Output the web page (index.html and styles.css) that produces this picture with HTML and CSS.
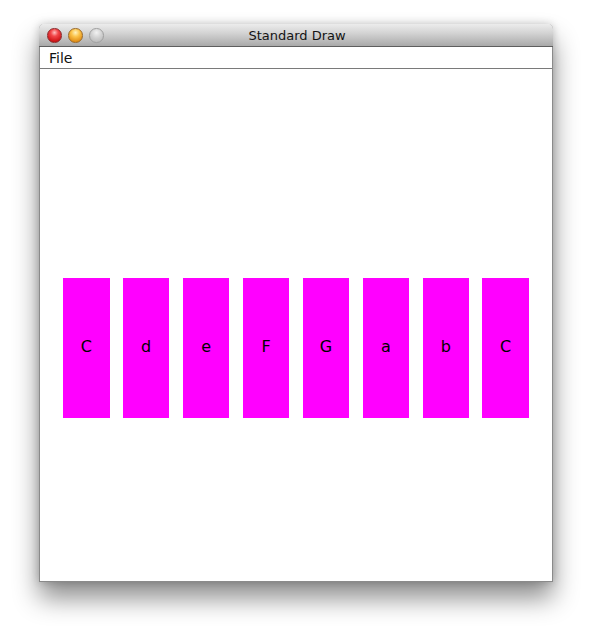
FILE: index.html
```html
<!DOCTYPE html>
<html>
<head>
<meta charset="utf-8">
<link rel="stylesheet" href="styles.css">
</head>
<body>
<div class="stage">
  <div class="window">
    <div class="titlebar">
      <div class="lights">
        <span class="light red"></span>
        <span class="light amber"></span>
        <span class="light grey"></span>
      </div>
      <div class="title">Standard Draw</div>
    </div>
    <div class="menubar"><span class="menu">File</span></div>
    <div class="canvas">
      <div class="bars">
        <div class="bar">C</div>
        <div class="bar">d</div>
        <div class="bar">e</div>
        <div class="bar">F</div>
        <div class="bar">G</div>
        <div class="bar">a</div>
        <div class="bar">b</div>
        <div class="bar">C</div>
      </div>
    </div>
  </div>
</div>
</body>
</html>
```
FILE: styles.css
```css
html, body {
  margin: 0;
  padding: 0;
  background: #ffffff;
}
body {
  width: 592px;
  height: 636px;
  overflow: hidden;
  font-family: "DejaVu Sans", "Liberation Sans", sans-serif;
}
.stage {
  padding: 24px 0 0 39px;
}
.window {
  width: 512px;
  border: 1px solid #8a8a8a;
  border-top: none;
  border-radius: 5px 5px 0 0;
  background: #ffffff;
  box-shadow: 0 16px 26px rgba(0, 0, 0, 0.45), 0 0 9px rgba(0, 0, 0, 0.2);
}
.titlebar {
  position: relative;
  height: 22px;
  margin: 0 -1px;
  border-radius: 5px 5px 0 0;
  background: linear-gradient(#ececec, #d4d4d4 40%, #a9a9a9);
  border-bottom: 1px solid #5e5e5e;
  display: flex;
  align-items: center;
  justify-content: center;
}
.lights {
  position: absolute;
  left: 8px;
  top: 4px;
  display: flex;
  gap: 6.5px;
}
.light {
  width: 14.5px;
  height: 14.5px;
  border-radius: 50%;
  box-sizing: border-box;
}
.red {
  background: radial-gradient(circle at 50% 28%, #ffc0c0 0%, #f2474a 32%, #d01518 75%, #8d0a0c 100%);
  border: 1px solid #8a2a2c;
}
.amber {
  background: radial-gradient(circle at 50% 28%, #fff4c0 0%, #fbc34a 36%, #e08c14 80%, #a8640c 100%);
  border: 1px solid #9a6a2a;
}
.grey {
  background: radial-gradient(circle at 50% 28%, #f2f2f2 0%, #d2d2d2 45%, #b2b2b2 100%);
  border: 1px solid #a0a0a0;
}
.title {
  font-size: 13px;
  color: #141414;
  padding-left: 2px;
}
.menubar {
  height: 21px;
  border-bottom: 1px solid #7a7a7a;
  display: flex;
  align-items: center;
  padding-left: 9px;
}
.menu {
  font-size: 14px;
  color: #111;
}
.canvas {
  height: 512px;
}
.bars {
  display: flex;
  gap: 13.43px;
  padding: 209px 0 0 23px;
}
.bar {
  width: 46.5px;
  height: 140px;
  padding-bottom: 4px;
  box-sizing: border-box;
  background: #ff00ff;
  display: flex;
  align-items: center;
  justify-content: center;
  font-size: 16px;
  color: #000;
}
```
